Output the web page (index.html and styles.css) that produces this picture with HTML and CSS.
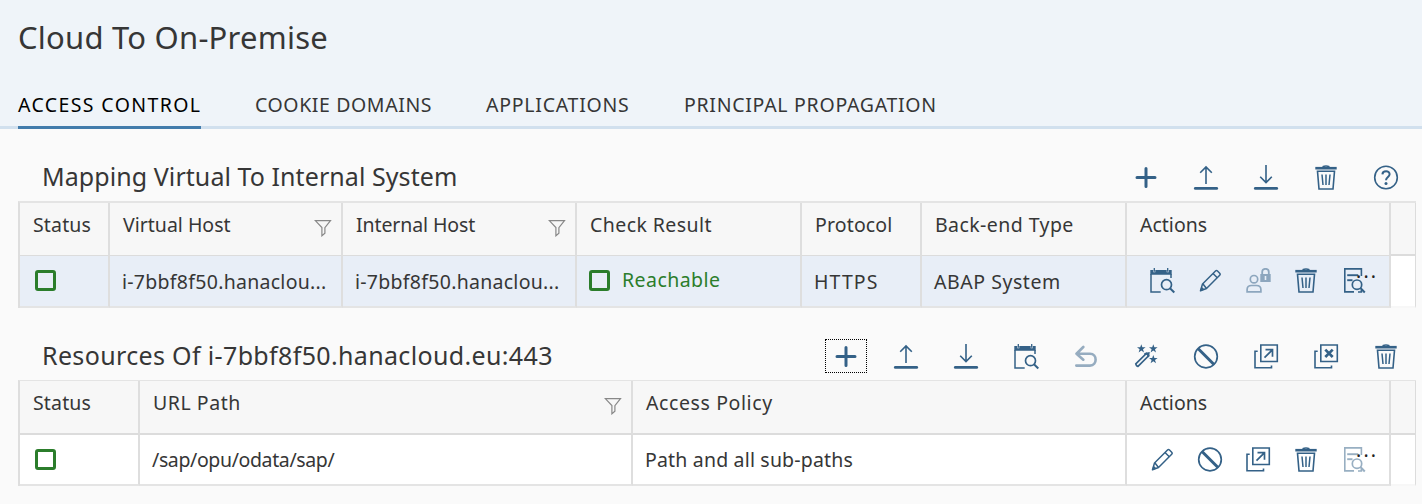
FILE: index.html
```html
<!DOCTYPE html>
<html lang="en">
<head>
<meta charset="utf-8">
<title>Cloud To On-Premise</title>
<link rel="stylesheet" href="styles.css">
</head>
<body>
<svg class="sprite" aria-hidden="true">
  <symbol id="plus" viewBox="0 0 26 26"><path d="M4 12.5h18M13 3.5v18" stroke-width="3" stroke-linecap="round"/></symbol>
  <symbol id="upload" viewBox="0 0 26 26"><path d="M2.3 23.4h21.4" stroke-width="2.8" stroke-linecap="round"/><path d="M13 19V2M7.2 7.8 13 2l5.800 5.800" stroke-width="1.600"/></symbol>
  <symbol id="download" viewBox="0 0 26 26"><path d="M2.3 23.4h21.4" stroke-width="2.8" stroke-linecap="round"/><path d="M13 0v17M7.200 11.700l5.800 5.800 5.800-5.800" stroke-width="1.600"/></symbol>
  <symbol id="trash" viewBox="0 0 26 26"><path d="M2.300 3.200h21.400" stroke-width="2.600"/><path d="M9.500 1.600q3.500-1.200 7 0" stroke-width="1.300"/><path d="M4.500 6.300h17L20 24H6z" stroke-width="1.600"/><path d="M9 9.500 10 20M13 9.500V20M17 9.500 16 20" stroke-width="1.500"/></symbol>
  <symbol id="help" viewBox="0 0 26 26"><circle cx="13" cy="12.500" r="11.300" stroke-width="1.600"/><path d="M9.400 9.400C9.600 5 16.800 5.200 16.600 9.300c-.1 2.500-3.500 2.900-3.600 5.900" stroke-width="2"/><circle class="solid" cx="13" cy="18.500" r="1.500"/></symbol>
  <symbol id="schedule" viewBox="0 0 26 26"><path class="solid" d="M1.300 2h3v2.300h2V2h11.400v2.300h2V2h3v4.800H1.300z"/><path d="M5.300 0v3.800M18.700 0v3.800" stroke-width="1.300"/><path d="M11.700 24H2V6M22 6v4" stroke-width="1.500"/><circle cx="17.500" cy="16.700" r="5" stroke-width="1.700"/><path d="m21 20.300 4.300 4.200" stroke-width="2"/></symbol>
  <symbol id="edit" viewBox="0 0 26 26"><path d="m3.500 22.700 2-6.700L18.500 3q1-1 2 0l2.200 2.200q1 1 0 2L9.500 20.500z M16 5.500l4.300 4.300M6 16l3.500 4.500" stroke-width="1.500" stroke-linejoin="round"/><path class="solid" d="m2.900 23.200 1.500-4.600 3.200 2.900z"/></symbol>
  <symbol id="person-lock" viewBox="0 0 26 26"><circle cx="9" cy="11.200" r="3.700" stroke-width="1.700"/><path d="M2.100 23.900v-2.400q0-4 4.500-4h4.800q4.500 0 4.500 4v2.400z" stroke-width="1.700"/><path class="solid" fill-rule="evenodd" d="M15.300 6h10.400v8H15.300zM19.700 8v4h1.600V8z"/><path d="M17.200 6.500V4c0-4.200 6.600-4.200 6.600 0v2.500" stroke-width="1.800"/></symbol>
  <symbol id="doc-search" viewBox="0 0 26 26"><path d="M13 23.900H3.800V.9h16.600V8M20.400 22v2H17" stroke-width="1.600"/><path d="M6.200 7.200h11" stroke-width="1.900"/><path d="M6.200 12.200h5.300" stroke-width="1.900"/><circle cx="16" cy="16.700" r="4.700" stroke-width="1.700"/><path d="m19.400 20 4.400 4.500" stroke-width="2"/></symbol>
  <symbol id="undo" viewBox="0 0 26 26"><path d="M10.300 3 3.500 9.700l6.800 6M3.500 9.700H17c7.500 0 7.500 11.900 0 11.900H3.300" stroke-width="2.600" stroke-linecap="round" stroke-linejoin="round"/></symbol>
  <symbol id="wand" viewBox="0 0 26 26"><path d="m2.800 19.800 10.600-10.400 2.200 2.400L5 22.300Q3.300 22.200 2.800 19.800z" stroke-width="1.700"/><path d="m11.400 10 4.200-.8-.5 4" stroke-width="2"/><path class="solid" d="m8.300.3 1.100 3h3.200L10 5.300l1 3.200-2.700-1.900-2.700 1.900 1-3.200L4 3.300h3.200zM20.300.3l1.100 3h3.200L22 5.300l1 3.200-2.700-1.900-2.700 1.900 1-3.200L16 3.300h3.200zM20.300 11l1.100 3h3.200L22 16l1 3.200-2.700-1.900-2.700 1.900 1-3.200-2.600-2h3.200z"/></symbol>
  <symbol id="block" viewBox="0 0 26 26"><circle cx="13" cy="12.500" r="11.300" stroke-width="1.700"/><path d="m5 4.500 16 16" stroke-width="3"/></symbol>
  <symbol id="popup" viewBox="0 0 26 26"><path d="M7.800 1h16.500v16.500H7.800z" stroke-width="1.600"/><path d="M4.700 7.300H2V23.800h16.500v-2.300" stroke-width="1.600"/><path d="m11.500 13.700 7.800-7.800M12.500 5.700h7v7" stroke-width="1.700"/></symbol>
  <symbol id="popup-close" viewBox="0 0 26 26"><path d="M7.800 1h16.500v16.500H7.800z" stroke-width="1.600"/><path d="M4.700 7.300H2V23.800h16.500v-2.300" stroke-width="1.600"/><path d="m12.300 5.600 7.400 7.400M19.700 5.600l-7.400 7.400" stroke-width="2.700"/></symbol>
  <symbol id="filter" viewBox="0 0 18 18"><path d="M1.300 1.600h15.200l-5.600 7v5.600l-3 2.600V8.600z" stroke-width="1.200"/></symbol>
</svg>

<header class="page-header">
  <h1 class="page-title">Cloud To On-Premise</h1>
  <nav class="tabs">
    <a class="tab tab-active t-access">ACCESS CONTROL</a>
    <a class="tab t-cookie">COOKIE DOMAINS</a>
    <a class="tab t-apps">APPLICATIONS</a>
    <a class="tab t-principal">PRINCIPAL PROPAGATION</a>
  </nav>
</header>

<main class="content">
  <section class="panel">
    <div class="toolbar">
      <h2 class="panel-title t-mapping">Mapping Virtual To Internal System</h2>
      <div class="tools">
        <svg class="icon"><use href="#plus"/></svg>
        <svg class="icon"><use href="#upload"/></svg>
        <svg class="icon"><use href="#download"/></svg>
        <svg class="icon"><use href="#trash"/></svg>
        <svg class="icon"><use href="#help"/></svg>
      </div>
    </div>
    <div class="table systems">
      <div class="th"><span class="t-status">Status</span></div>
      <div class="th"><span>Virtual Host</span><svg class="filter"><use href="#filter"/></svg></div>
      <div class="th"><span class="t-internal">Internal Host</span><svg class="filter"><use href="#filter"/></svg></div>
      <div class="th"><span class="t-check">Check Result</span></div>
      <div class="th"><span class="t-status">Protocol</span></div>
      <div class="th"><span class="t-check">Back-end Type</span></div>
      <div class="th"><span>Actions</span></div>
      <div class="th th-end"></div>
      <div class="td"><i class="status"></i></div>
      <div class="td"><span class="t-host">i-7bbf8f50.hanaclou...</span></div>
      <div class="td"><span class="t-host">i-7bbf8f50.hanaclou...</span></div>
      <div class="td td-check"><i class="status"></i><span class="reachable">Reachable</span></div>
      <div class="td"><span class="t-https">HTTPS</span></div>
      <div class="td"><span class="t-abap">ABAP System</span></div>
      <div class="td actions">
        <svg class="icon"><use href="#schedule"/></svg>
        <svg class="icon"><use href="#edit"/></svg>
        <svg class="icon disabled"><use href="#person-lock"/></svg>
        <svg class="icon"><use href="#trash"/></svg>
        <svg class="icon"><use href="#doc-search"/></svg>
        <span class="more">...</span>
      </div>
      <div class="td td-end"></div>
    </div>
  </section>

  <section class="panel">
    <div class="toolbar">
      <h2 class="panel-title t-resources">Resources Of i-7bbf8f50.hanacloud.eu:443</h2>
      <div class="tools">
        <span class="focused"><svg class="icon"><use href="#plus"/></svg></span>
        <svg class="icon"><use href="#upload"/></svg>
        <svg class="icon"><use href="#download"/></svg>
        <svg class="icon"><use href="#schedule"/></svg>
        <svg class="icon disabled"><use href="#undo"/></svg>
        <svg class="icon"><use href="#wand"/></svg>
        <svg class="icon"><use href="#block"/></svg>
        <svg class="icon"><use href="#popup"/></svg>
        <svg class="icon"><use href="#popup-close"/></svg>
        <svg class="icon"><use href="#trash"/></svg>
      </div>
    </div>
    <div class="table resources">
      <div class="th"><span class="t-status">Status</span></div>
      <div class="th"><span class="t-abap">URL Path</span><svg class="filter"><use href="#filter"/></svg></div>
      <div class="th"><span class="t-policy">Access Policy</span></div>
      <div class="th"><span>Actions</span></div>
      <div class="th th-end"></div>
      <div class="td"><i class="status"></i></div>
      <div class="td"><span class="t-path">/sap/opu/odata/sap/</span></div>
      <div class="td"><span class="t-subpaths">Path and all sub-paths</span></div>
      <div class="td actions">
        <svg class="icon"><use href="#edit"/></svg>
        <svg class="icon"><use href="#block"/></svg>
        <svg class="icon"><use href="#popup"/></svg>
        <svg class="icon"><use href="#trash"/></svg>
        <svg class="icon disabled"><use href="#doc-search"/></svg>
        <span class="more">...</span>
      </div>
      <div class="td td-end"></div>
    </div>
  </section>
</main>
</body>
</html>
```

FILE: styles.css
```css
* { box-sizing: border-box; }
body {
  margin: 0;
  height: 504px;
  overflow: hidden;
  background: #fafafa;
  color: #363636;
  font: 19.5px/24px "Noto Sans", sans-serif;
  white-space: nowrap;
}
.sprite { display: none; }
.solid { fill: currentColor; stroke: none; }

.page-header {
  height: 129px;
  padding: 17px 18px 0;
  background: #eff4f9;
  border-bottom: 3px solid #d1e0ee;
}
.page-title { margin: 0; height: 74px; font-size: 31px; line-height: 41px; font-weight: 400; letter-spacing: .23px; }
.tabs { display: flex; gap: 54px; }
.tab { height: 38px; padding-top: 2px; border-bottom: 3px solid transparent; }
.tab-active { color: #000; border-color: #427cac; }
.t-access { width: 183px; letter-spacing: 1.38px; }
.t-cookie { width: 177px; letter-spacing: .6px; }
.t-apps { width: 144px; letter-spacing: .75px; }
.t-principal { width: 252px; letter-spacing: .72px; }

.content { padding: 0 6px 0 18px; }
.toolbar { display: flex; justify-content: space-between; height: 72px; padding: 36px 17px 0 24px; }
.panel-title { margin: -1px 0 0; font-size: 25px; line-height: 24px; font-weight: 400; }
.t-mapping { letter-spacing: .07px; }
.t-resources { letter-spacing: .35px; }
.tools { display: flex; gap: 34px; }
.icon { flex: none; width: 26px; height: 26px; fill: none; stroke: currentColor; color: #346187; }
.disabled { opacity: .5; }
.focused { width: 42px; height: 34px; margin: -5px -8px; padding: 4px 7px; border: 1px dotted #000; }

.table { display: grid; border-left: 2px solid #dedede; border-top: 2px solid #e4e4e4; }
.systems { grid-template: 53px 52px / 90px 233px 234px 225px 120px 205px 264px 25px; }
.resources { grid-template: 54px 51px / 120px 493px 494px 264px 25px; border-top-width: 1px; }
.th, .td { display: flex; border-right: 2px solid #dedede; }
.th { justify-content: space-between; padding: 10px 9px 0 13px; background: #f7f7f7; border-bottom: 1px solid #dcdcdc; }
.th-end, .td-end { border-right: 1px solid #dcdcdc; }
.th-end { border-bottom-width: 2px; }
.td { padding: 14px 0 0 12px; background: #fff; border-bottom: 2px solid #e4e4e4; }
.systems .td { background: #e8eef7; }
.systems .td-end { background: #fff; }
.td-end { border-bottom-color: #f7f7f7; }
.resources .th { border-bottom-width: 2px; }
.filter { width: 18px; height: 18px; margin-top: 6px; fill: none; stroke: #888; }
.status { flex: none; width: 21px; height: 21px; margin-left: 3px; border: 3px solid #2b7d2b; border-radius: 3px; }
.td-check .status { margin-left: 0; }
.reachable { margin: -2px 0 0 12px; color: #2b7d2b; letter-spacing: .45px; }
.t-status { letter-spacing: .15px; }
.t-internal { letter-spacing: -.1px; }
.t-check { letter-spacing: .43px; }
.t-host { letter-spacing: .28px; }
.t-https { letter-spacing: 1.1px; }
.t-abap { letter-spacing: .55px; }
.t-policy { letter-spacing: .6px; }
.t-path { margin-top: -1px; letter-spacing: -.37px; }
.t-subpaths { margin-top: -1px; letter-spacing: .18px; }
.actions { position: relative; gap: 22px; padding: 12px 0 0 22px; }
.more { position: absolute; left: 229px; top: 3px; letter-spacing: 2.2px; color: #222; }
```
